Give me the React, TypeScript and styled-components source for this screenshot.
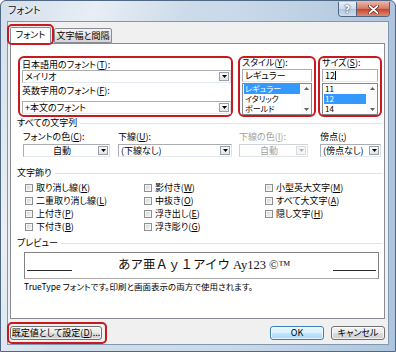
import React from 'react';
import styled, { createGlobalStyle } from 'styled-components';

const RED = '#c8191e';
const FONT = '"Noto Sans CJK JP", "Noto Sans", sans-serif';

const GlobalStyle = createGlobalStyle`
  html, body { margin: 0; padding: 0; background: #fff; }
  body { width: 396px; height: 352px; overflow: hidden; font-family: ${FONT}; font-feature-settings: "palt" 1; }
  * { box-sizing: border-box; }
  u { text-underline-offset: 1px; }
`;

const Window = styled.div`
  width: 396px;
  height: 352px;
  border: 1px solid #4f6884;
  border-radius: 6px 6px 0 0;
  background:
    linear-gradient(112deg, rgba(255,255,255,0) 0%, rgba(255,255,255,0.5) 18%, rgba(255,255,255,0) 36%),
    linear-gradient(90deg, #d3dfeb 0%, #cad9e9 60%, #aec5dd 100%);
  display: flex;
  flex-direction: column;
  padding: 0 6px 6px 6px;
`;

const TitleBar = styled.div`
  height: 20px;
  display: flex;
  justify-content: space-between;
  align-items: flex-start;
`;

const TitleText = styled.div`
  font-size: 10px;
  line-height: 18px;
  padding-left: 1px;
  color: #111;
  text-shadow: 0 0 4px #fff;
`;

const CaptionGroup = styled.div`
  display: flex;
  height: 15px;
  margin-top: 1px;
  margin-right: -1px;
  border: 1px solid #4f6480;
  border-top: none;
  border-radius: 0 0 4px 4px;
  overflow: hidden;
`;

const HelpButton = styled.div`
  width: 18px;
  border-right: 1px solid #4f6480;
  background: linear-gradient(180deg, #e9eff6 0%, #cddbea 48%, #b3c7dc 52%, #cfdeee 100%);
  display: flex;
  align-items: center;
  justify-content: center;
  font-family: "DejaVu Sans", sans-serif;
  font-size: 10px;
  font-weight: bold;
  color: #fff;
  text-shadow: 0 0 1px #33475f, 0 0 2px #33475f;
`;

const CloseButton = styled.div`
  width: 32px;
  background: linear-gradient(180deg, #eab1a3 0%, #d67a66 46%, #c6462f 52%, #db8a73 100%);
  display: flex;
  align-items: center;
  justify-content: center;
`;

const Client = styled.div`
  flex: 1;
  background: #f0f0f0;
  border: 1px solid #7f97b1;
  display: flex;
  flex-direction: column;
  padding: 2px 3px 0 2px;
`;

const TabStrip = styled.div`
  height: 21px;
  display: flex;
  align-items: flex-end;
  margin-bottom: -2px;
  position: relative;
  z-index: 1;
`;

const RedRing = styled.div<{ $pad?: string }>`
  border: 2px solid ${RED};
  border-radius: 5px;
  padding: ${p => p.$pad || '1px'};
  display: flex;
`;

const TabRing = styled(RedRing)`
  margin-left: -3px;
  align-self: flex-start;
`;

const Tab = styled.div<{ $active?: boolean }>`
  height: ${p => (p.$active ? 16 : 15)}px;
  width: ${p => (p.$active ? 41 : 58)}px;
  border: 1px solid #898c95;
  border-bottom: ${p => (p.$active ? 'none' : '1px solid #898c95')};
  border-radius: 2px 2px 0 0;
  background: ${p => (p.$active ? '#fff' : 'linear-gradient(180deg, #f4f4f4 0%, #e8e8e8 50%, #dcdcdc 51%, #d6d6d6 100%)')};
  font-size: 9px;
  line-height: 14px;
  text-align: center;
  color: #000;
  margin-bottom: ${p => (p.$active ? 0 : 2)}px;
`;

const Panel = styled.div`
  height: 276px;
  background: #fff;
  border: 1px solid #898c95;
  display: flex;
  flex-direction: column;
`;

const FontRow = styled.div`
  display: flex;
  margin: 12px 0 0 7px;
`;

const GroupBox = styled.div<{ $w: number; $ml?: number }>`
  width: ${p => p.$w}px;
  height: 61px;
  margin-left: ${p => p.$ml || 0}px;
  border: 2px solid ${RED};
  border-radius: 6px;
  padding: 0 0 0 2px;
  display: flex;
  flex-direction: column;
`;

const Label = styled.div<{ $mt?: number; $mb?: number; $disabled?: boolean }>`
  font-size: 9px;
  line-height: 11px;
  height: 11px;
  flex: none;
  white-space: nowrap;
  margin-top: ${p => p.$mt || 0}px;
  margin-bottom: ${p => p.$mb || 0}px;
  color: ${p => (p.$disabled ? '#a0a0a0' : '#000')};
`;

const Combo = styled.div<{ $w?: number; $disabled?: boolean }>`
  width: ${p => (p.$w ? `${p.$w}px` : '100%')};
  height: 13px;
  flex: none;
  border: 1px solid ${p => (p.$disabled ? '#cfd3d8' : '#abadb3')};
  border-right-color: ${p => (p.$disabled ? '#e0e3e6' : '#dbdfe6')};
  border-bottom-color: ${p => (p.$disabled ? '#e0e3e6' : '#e3e9ef')};
  background: #fff;
  display: flex;
  color: ${p => (p.$disabled ? '#a0a0a0' : '#000')};
`;

const ComboText = styled.div<{ $center?: boolean }>`
  flex: 1;
  font-size: 9px;
  line-height: 11px;
  padding-left: 2px;
  white-space: nowrap;
  overflow: hidden;
  text-align: ${p => (p.$center ? 'center' : 'left')};
`;

const DropButton = styled.div<{ $disabled?: boolean }>`
  width: 10px;
  margin: 1px 1px 1px 0;
  border: 1px solid ${p => (p.$disabled ? '#d8dbde' : '#9aa0a8')};
  background: ${p => (p.$disabled ? '#f6f6f6' : 'linear-gradient(180deg, #fbfbfb 0%, #e4e4e4 100%)')};
  display: flex;
  align-items: center;
  justify-content: center;
`;

const TextInput = styled.div`
  height: 13px;
  flex: none;
  border: 1px solid #abadb3;
  border-bottom-color: #e3e9ef;
  font-size: 9px;
  line-height: 11px;
  padding-left: 2px;
  background: #fff;
  margin: 1px 2px 0 0;
`;

const Caret = styled.span`
  display: inline-block;
  width: 1px;
  height: 9px;
  background: #000;
  vertical-align: -1px;
`;

const ListBox = styled.div`
  height: 32px;
  flex: none;
  margin: 1px 2px 0 0;
  border: 1px solid #828790;
  display: flex;
  background: #fff;
`;

const ListItems = styled.div`
  flex: 1;
  display: flex;
  flex-direction: column;
  padding: 0 1px;
`;

const ListItem = styled.div<{ $sel?: boolean }>`
  height: 10px;
  flex: none;
  font-size: 8px;
  line-height: 10px;
  padding-left: 1px;
  white-space: nowrap;
  background: ${p => (p.$sel ? '#3399ff' : 'transparent')};
  color: ${p => (p.$sel ? '#fff' : '#000')};
`;

const ScrollBar = styled.div`
  width: 10px;
  display: flex;
  flex-direction: column;
  justify-content: space-between;
  align-items: center;
  padding: 3px 0;
  background: #fafafa;
`;

const SectionHeader = styled.div<{ $mt?: number }>`
  display: flex;
  align-items: center;
  margin: ${p => p.$mt || 0}px 2px 0 6px;
  font-size: 9px;
  line-height: 12px;
  height: 12px;
  gap: 3px;
  &::after {
    content: '';
    flex: 1;
    height: 1px;
    background: #dfe3e8;
  }
`;

const AttrGrid = styled.div<{ $mt?: number }>`
  display: grid;
  grid-template-columns: 95px 121px 81px 62px;
  margin: ${p => p.$mt || 0}px 0 0 12px;
`;

const CheckGrid = styled.div`
  display: grid;
  grid-template-columns: 119px 121px auto;
  grid-auto-flow: column;
  grid-template-rows: repeat(4, 13px);
  margin: 2px 0 0 14px;
`;

const CheckItem = styled.label`
  display: flex;
  align-items: center;
  font-size: 9px;
  line-height: 13px;
  white-space: nowrap;
`;

const CheckBox = styled.span`
  width: 8px;
  height: 8px;
  border: 1px solid #8e8f8f;
  background: linear-gradient(135deg, #c9cdd2 0%, #e8eaec 60%, #f6f6f6 100%);
  box-shadow: inset 0 0 0 1px #f4f4f4;
  margin-right: 3px;
  flex: none;
`;

const PreviewBox = styled.div`
  height: 27px;
  margin: 3px 5px 0 13px;
  border: 1px solid #838383;
  border-bottom-color: #a8a8a8;
  display: flex;
  align-items: flex-start;
  padding: 0 2px;
`;

const BaseLine = styled.div<{ $w: number }>`
  width: ${p => p.$w}px;
  height: 1px;
  background: #2a2a2a;
  margin-top: 17px;
  flex: none;
`;

const PreviewText = styled.div`
  flex: 1;
  text-align: center;
  font-family: "Liberation Serif", "Noto Sans CJK JP", serif;
  font-feature-settings: normal;
  font-size: 12.5px;
  line-height: 24px;
  color: #111;
  white-space: nowrap;
  padding-left: 4px;
`;

const Note = styled.div`
  font-size: 8.5px;
  line-height: 11px;
  margin: 2px 0 0 13px;
  white-space: nowrap;
`;

const ButtonRow = styled.div`
  display: flex;
  align-items: center;
  margin-top: 3px;
`;

const DefaultRing = styled(RedRing)`
  margin-left: -3px;
  padding: 2px 3px 2px 1px;
`;

const Button = styled.div<{ $w: number; $ml?: number; $default?: boolean }>`
  width: ${p => p.$w}px;
  height: 14px;
  margin-left: ${p => p.$ml || 0}px;
  border: 1px solid ${p => (p.$default ? '#3c7fb1' : '#707070')};
  border-radius: 3px;
  background: ${p =>
    p.$default
      ? 'linear-gradient(180deg, #eaf6fd 0%, #d9f0fc 50%, #bee6fd 51%, #a7d9f5 100%)'
      : 'linear-gradient(180deg, #f2f2f2 0%, #ebebeb 50%, #dddddd 51%, #cfcfcf 100%)'};
  box-shadow: inset 0 0 0 1px rgba(255, 255, 255, 0.7);
  font-size: 9px;
  line-height: 12px;
  text-align: center;
  white-space: nowrap;
  color: #000;
`;

const Spacer = styled.div`
  flex: 1;
`;

const Arrow = ({ up, color = '#000' }: { up?: boolean; color?: string }) => (
  <svg width="5" height="3" viewBox="0 0 5 3">
    <path d={up ? 'M0 3 L2.5 0 L5 3 Z' : 'M0 0 L5 0 L2.5 3 Z'} fill={color} />
  </svg>
);

const ComboBox = ({ w, text, center, disabled }: { w?: number; text: string; center?: boolean; disabled?: boolean }) => (
  <Combo $w={w} $disabled={disabled}>
    <ComboText $center={center}>{text}</ComboText>
    <DropButton $disabled={disabled}>
      <Arrow color={disabled ? '#b0b0b0' : '#000'} />
    </DropButton>
  </Combo>
);

const List = ({ items, sel }: { items: string[]; sel: number }) => (
  <ListBox>
    <ListItems>
      {items.map((t, i) => (
        <ListItem key={t} $sel={i === sel}>{t}</ListItem>
      ))}
    </ListItems>
    <ScrollBar>
      <Arrow up color="#606060" />
      <Arrow color="#606060" />
    </ScrollBar>
  </ListBox>
);

const Check = ({ children }: { children: React.ReactNode }) => (
  <CheckItem>
    <CheckBox />
    {children}
  </CheckItem>
);

export default function App() {
  return (
    <>
      <GlobalStyle />
      <Window>
        <TitleBar>
          <TitleText>フォント</TitleText>
          <CaptionGroup>
            <HelpButton>?</HelpButton>
            <CloseButton>
              <svg width="11" height="9" viewBox="0 0 11 9">
                <path d="M1.5 1 L9.5 8 M9.5 1 L1.5 8" stroke="#5a1a10" strokeWidth="3.2" strokeLinecap="round" />
                <path d="M1.5 1 L9.5 8 M9.5 1 L1.5 8" stroke="#fff" strokeWidth="1.8" strokeLinecap="round" />
              </svg>
            </CloseButton>
          </CaptionGroup>
        </TitleBar>
        <Client>
          <TabStrip>
            <TabRing $pad="1px 1px 0 1px">
              <Tab $active>フォント</Tab>
            </TabRing>
            <Tab>文字幅と間隔</Tab>
          </TabStrip>
          <Panel>
            <FontRow>
              <GroupBox $w={215}>
                <Label $mt={1}>日本語用のフォント(<u>T</u>):</Label>
                <ComboBox text="メイリオ" />
                <Label $mt={2} $mb={5}>英数字用のフォント(<u>F</u>):</Label>
                <ComboBox text="+本文のフォント" />
              </GroupBox>
              <GroupBox $w={78} $ml={5}>
                <Label $mt={-1}>スタイル(<u>Y</u>):</Label>
                <TextInput>レギュラー</TextInput>
                <List items={['レギュラー', 'イタリック', 'ボールド']} sel={0} />
              </GroupBox>
              <GroupBox $w={64} $ml={2}>
                <Label $mt={-1}>サイズ(<u>S</u>):</Label>
                <TextInput>12<Caret /></TextInput>
                <List items={['11', '12', '14']} sel={1} />
              </GroupBox>
            </FontRow>

            <SectionHeader $mt={0}>すべての文字列</SectionHeader>
            <AttrGrid $mt={2}>
              <Label>フォントの色(<u>C</u>):</Label>
              <Label>下線(<u>U</u>):</Label>
              <Label $disabled>下線の色(<u>I</u>):</Label>
              <Label>傍点(<u>;</u>)</Label>
            </AttrGrid>
            <AttrGrid $mt={2}>
              <ComboBox w={87} text="自動" center />
              <ComboBox w={114} text="(下線なし)" />
              <ComboBox w={69} text="自動" center disabled />
              <ComboBox w={61} text="(傍点なし)" />
            </AttrGrid>

            <SectionHeader $mt={10}>文字飾り</SectionHeader>
            <CheckGrid>
              <Check>取り消し線(<u>K</u>)</Check>
              <Check>二重取り消し線(<u>L</u>)</Check>
              <Check>上付き(<u>P</u>)</Check>
              <Check>下付き(<u>B</u>)</Check>
              <Check>影付き(<u>W</u>)</Check>
              <Check>中抜き(<u>O</u>)</Check>
              <Check>浮き出し(<u>E</u>)</Check>
              <Check>浮き彫り(<u>G</u>)</Check>
              <Check>小型英大文字(<u>M</u>)</Check>
              <Check>すべて大文字(<u>A</u>)</Check>
              <Check>隠し文字(<u>H</u>)</Check>
            </CheckGrid>

            <SectionHeader $mt={4}>プレビュー</SectionHeader>
            <PreviewBox>
              <BaseLine $w={45} />
              <PreviewText>あア亜Ａｙ１アイウ Ay123 ©™</PreviewText>
              <BaseLine $w={43} />
            </PreviewBox>
            <Note>TrueType フォントです。印刷と画面表示の両方で使用されます。</Note>
          </Panel>
          <ButtonRow>
            <DefaultRing>
              <Button $w={92}>既定値として設定(<u>D</u>)...</Button>
            </DefaultRing>
            <Spacer />
            <Button $w={54} $default>OK</Button>
            <Button $w={54} $ml={7}>キャンセル</Button>
          </ButtonRow>
        </Client>
      </Window>
    </>
  );
}
